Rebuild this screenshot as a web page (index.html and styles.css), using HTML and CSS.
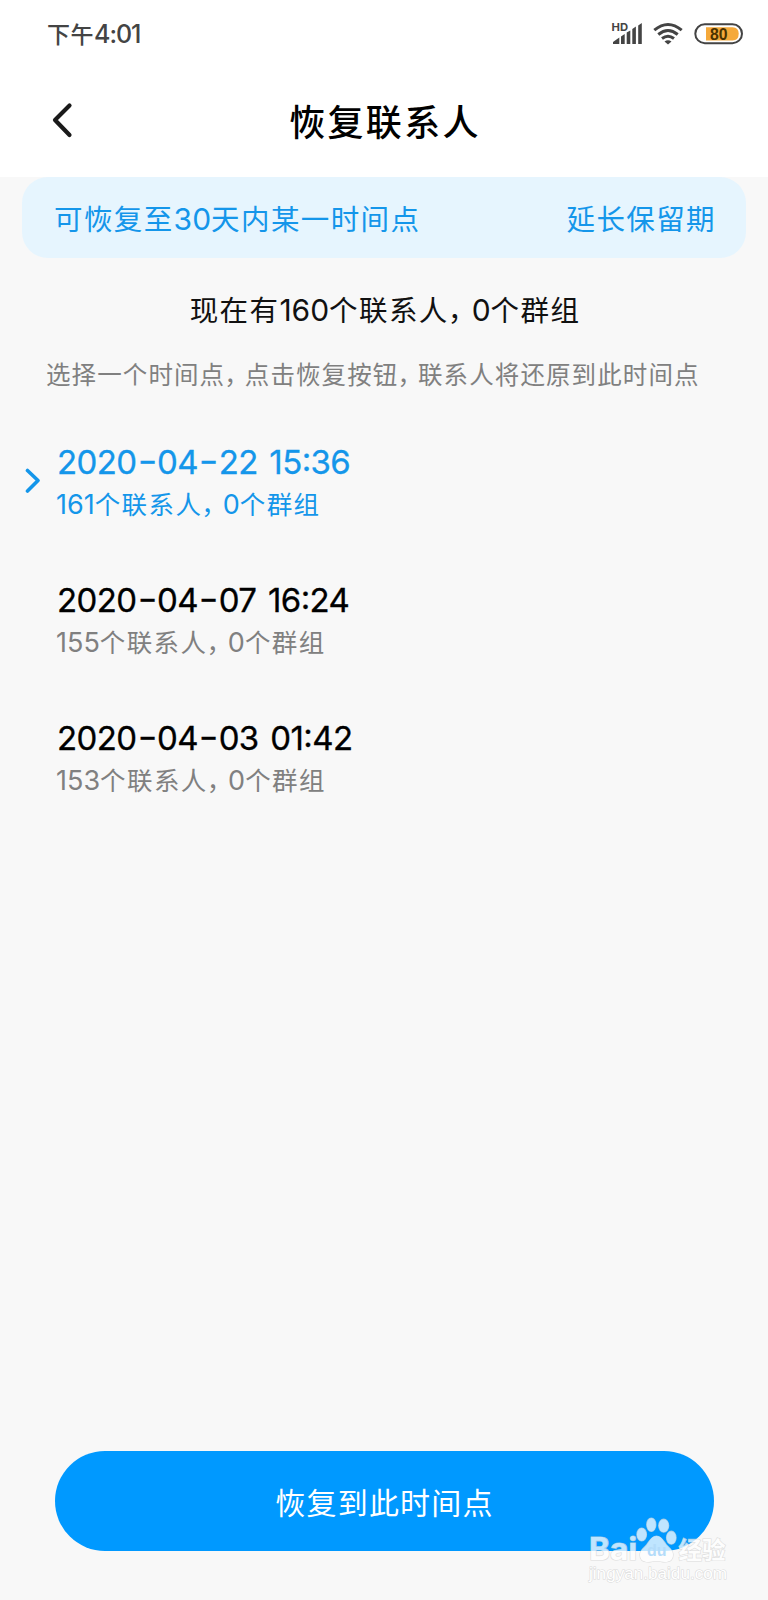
FILE: index.html
```html
<!DOCTYPE html>
<html lang="zh-CN">
<head>
    <meta charset="UTF-8">
    <meta name="viewport" content="width=device-width, initial-scale=1.0">
    <title>恢复联系人</title>
    <link rel="stylesheet" href="styles.css">
</head>
<body>
    <div class="screen">
        <div class="status-bar">
            <span class="clock">下午<span class="num">4:01</span></span>
            <svg class="status-icons" width="140" height="30" viewBox="0 0 140 30">
                <text class="hd" x="1.500" y="13.500" textLength="16.500" lengthAdjust="spacingAndGlyphs">HD</text>
                <g fill="#444">
                    <path d="M3 27v-2l6.300-4.500v6.500z"/>
                    <path d="M11 19.500l3.700-2.500v10h-3.700z"/>
                    <path d="M16.700 15.500l3.600-2v13.500h-3.600z"/>
                    <path d="M22.300 12l3.600-2.500v17.500h-3.600z"/>
                    <path d="M28.200 8.500l3.600-2.500v21h-3.600z"/>
                    <path d="M54.500 24.500q3.500-2.500 7 0l-3.500 3z"/>
                </g>
                <g fill="none" stroke="#444" stroke-width="3">
                    <path d="M44.300 13.200q13.700-11.400 27.400 0"/>
                    <path d="M48.300 17.500q9.700-8 19.400 0"/>
                    <path d="M52 21.500q6-4.600 12 0"/>
                </g>
                <path d="M96 10.200h26.500q6.200 0 6.200 6.600t-6.200 6.600h-26.500z" fill="#f5a93a"/>
                <rect x="85.300" y="7.200" width="46.700" height="19" rx="9.500" fill="none" stroke="#444" stroke-width="2"/>
                <text class="level" x="100" y="22.500" textLength="17.500" lengthAdjust="spacingAndGlyphs">80</text>
            </svg>
        </div>

        <div class="header">
            <svg class="back" width="24" height="38" viewBox="0 0 24 38">
                <path d="M19.500 4.500L5 19L19.500 34" fill="none" stroke="#1a1a1a" stroke-width="4.200" stroke-linecap="round" stroke-linejoin="round"/>
            </svg>
            <h1>恢复联系人</h1>
        </div>

        <div class="content">
            <div class="banner">
                <span>可恢复至<span class="num">30</span>天内某一时间点</span>
                <span class="extend">延长保留期</span>
            </div>

            <p class="summary">现在有<span class="num">160</span>个联系人<span class="comma">，</span><span class="num">0</span>个群组</p>
            <p class="hint">选择一个时间点<span class="comma">，</span>点击恢复按钮<span class="comma">，</span>联系人将还原到此时间点</p>

            <div class="list">
                <div class="item active">
                    <svg class="arrow" width="18" height="26" viewBox="0 0 18 26">
                        <path d="M3.500 2.500L14 12.500L3.500 23" fill="none" stroke="#1496ea" stroke-width="3.600" stroke-linecap="round" stroke-linejoin="round"/>
                    </svg>
                    <p class="date">2020<span class="dash">-</span>04<span class="dash">-</span>22 15:36</p>
                    <p class="count"><span class="num">161</span>个联系人<span class="comma">，</span><span class="num">0</span>个群组</p>
                </div>
                <div class="item">
                    <p class="date">2020<span class="dash">-</span>04<span class="dash">-</span>07 16:24</p>
                    <p class="count"><span class="num">155</span>个联系人<span class="comma">，</span><span class="num">0</span>个群组</p>
                </div>
                <div class="item">
                    <p class="date">2020<span class="dash">-</span>04<span class="dash">-</span>03 01:42</p>
                    <p class="count"><span class="num">153</span>个联系人<span class="comma">，</span><span class="num">0</span>个群组</p>
                </div>
            </div>
        </div>

        <button class="restore-btn">恢复到此时间点</button>

        <svg class="watermark" width="150" height="80" viewBox="0 0 150 80">
            <g class="mark">
                <text x="4" y="50" font-size="31" textLength="48" lengthAdjust="spacingAndGlyphs">Bai</text>
                <ellipse cx="56.700" cy="24.500" rx="4.800" ry="6.500"/>
                <ellipse cx="66.300" cy="14.700" rx="4.600" ry="6.700"/>
                <ellipse cx="78.700" cy="15.700" rx="5" ry="6.500"/>
                <ellipse cx="86.300" cy="27.700" rx="4.800" ry="6.500"/>
                <path d="M71.500 26c5 0 7 5 10 9c3 3 6.500 5 6.500 10c0 5-3.500 7-8 7c-3.500 0-5-1-8.500-1s-5 1-8.500 1c-4.500 0-8-2-8-7c0-5 4-7 6.500-10c3-4 5-9 10-9z"/>
                <text x="93.500" y="48.500" font-size="23.500" textLength="47" lengthAdjust="spacingAndGlyphs">经验</text>
            </g>
            <text class="du" x="62" y="46" textLength="19.500" lengthAdjust="spacingAndGlyphs">du</text>
            <text class="site" x="4" y="68.500" textLength="138" lengthAdjust="spacingAndGlyphs">jingyan.baidu.com</text>
        </svg>
    </div>
</body>
</html>
```
FILE: styles.css
```css
* {
    box-sizing: border-box;
}

body {
    margin: 0;
    background: #f8f8f8;
    font-family: "Noto Sans CJK SC", sans-serif;
}

h1, p {
    margin: 0;
    font-weight: normal;
}

.screen {
    position: relative;
    width: 768px;
    height: 1600px;
    overflow: hidden;
    display: flex;
    flex-direction: column;
}

.num, .date {
    font-family: Inter, sans-serif;
}

.status-bar {
    height: 68px;
    padding: 0 18px 0 47px;
    background: #fff;
    display: flex;
    justify-content: space-between;
    align-items: center;
}

.clock {
    margin-bottom: 2px;
    font-size: 23px;
    font-weight: 500;
    letter-spacing: 0.5px;
    color: #444;
}

.clock .num {
    font-size: 25px;
    letter-spacing: -1px;
}

.status-icons {
    margin-top: -5px;
}

.hd {
    font: bold 11px Inter, sans-serif;
    fill: #444;
}

.level {
    font: bold 16px "Liberation Sans", sans-serif;
    fill: #4a3200;
}

.header {
    height: 109px;
    padding: 0 50px;
    background: #fff;
    display: grid;
    grid-template-columns: 24px 1fr 24px;
    align-items: center;
}

.back {
    margin-bottom: 5px;
}

h1 {
    font-size: 36px;
    font-weight: 500;
    letter-spacing: 2.3px;
    line-height: 50px;
    text-align: center;
    color: #000;
    margin-bottom: 6px;
    padding-left: 2px;
}

.content {
    flex: 1;
}

.banner {
    height: 81px;
    margin: 0 22px;
    padding: 0 30px 0 32px;
    border-radius: 26px;
    background: #e6f5fe;
    color: #1496ea;
    font-size: 28.5px;
    letter-spacing: 1.4px;
    line-height: 81px;
    display: flex;
    justify-content: space-between;
}

.banner .num, .summary .num {
    font-size: 30px;
    letter-spacing: 0;
}

.summary {
    margin-top: 31px;
    height: 40px;
    padding-left: 2px;
    line-height: 40px;
    font-size: 28.5px;
    letter-spacing: 1.4px;
    text-align: center;
    color: #111;
}

.comma {
    margin-left: -1px;
    letter-spacing: -0.16em;
}

.hint {
    margin-top: 25px;
    height: 40px;
    padding-left: 46px;
    line-height: 40px;
    font-size: 24.5px;
    letter-spacing: 1.1px;
    white-space: nowrap;
    color: #808080;
}

.list {
    margin-top: 46px;
}

.item {
    position: relative;
    height: 138px;
    padding-left: 56px;
}

.date {
    height: 42px;
    padding-left: 1px;
    line-height: 44px;
    font-size: 33px;
    font-weight: 400;
    letter-spacing: -0.6px;
    word-spacing: 3px;
    font-feature-settings: "case";
    color: #000;
    -webkit-text-stroke: 0.3px;
}

.dash {
    display: inline-block;
    margin: 0 3px;
    transform: scaleX(1.3);
}

.count {
    height: 42px;
    line-height: 42px;
    font-size: 25.5px;
    letter-spacing: 1.4px;
    color: #808080;
}

.count .num {
    font-size: 27px;
    letter-spacing: 0;
}

.active .date, .active .count {
    color: #1496ea;
}

.arrow {
    position: absolute;
    left: 24px;
    top: 28px;
}

.restore-btn {
    height: 100px;
    margin: 0 54px 49px 55px;
    border: none;
    border-radius: 50px;
    background: #0099ff;
    color: #fff;
    font-family: "Noto Sans CJK SC", sans-serif;
    font-size: 30px;
    letter-spacing: 1.2px;
    cursor: pointer;
}

.watermark {
    position: absolute;
    left: 585px;
    top: 1510px;
    pointer-events: none;
}

.mark {
    font-family: Inter, "Noto Sans CJK SC", sans-serif;
    font-weight: bold;
    fill: #fff;
    stroke: #d4d4d4;
    stroke-width: 1.2px;
    paint-order: stroke;
    opacity: 0.75;
}

.du {
    font: bold 17px "Liberation Sans", sans-serif;
    fill: #b4dcfa;
}

.site {
    font: 16px "Liberation Sans", sans-serif;
    fill: #fff;
    stroke: #d8d8d8;
    stroke-width: 1px;
    paint-order: stroke;
}
```
